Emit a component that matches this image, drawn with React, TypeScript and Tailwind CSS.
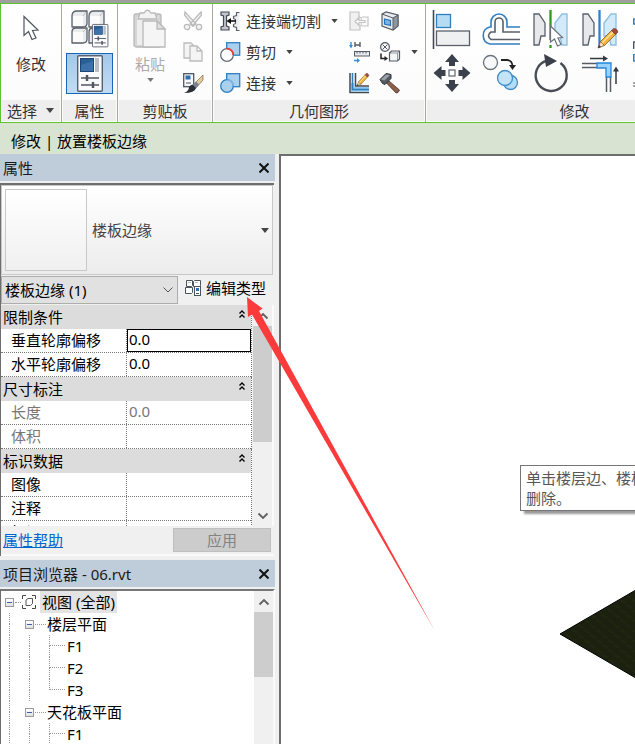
import React from 'react';

const Caret = ({ className = '' }: { className?: string }) => (
  <svg viewBox="0 0 8 5" className={`h-1 w-[7px] shrink-0 fill-[#444] ${className}`}>
    <path d="M0 0h8L4 5z" />
  </svg>
);

const Chevron = ({ up = false }: { up?: boolean }) => (
  <svg viewBox="0 0 12 8" className="h-2 w-3" fill="none" stroke="#606060" strokeWidth="1.800">
    {up ? <path d="M1.500 6.500L6 2l4.500 4.500" /> : <path d="M1.500 1.500L6 6l4.500-4.500" />}
  </svg>
);

const CloseButton = ({ label }: { label: string }) => (
  <button aria-label={label} className="p-1">
    <svg viewBox="0 0 10 10" className="size-[10px]" stroke="#111" strokeWidth="2">
      <path d="M0.500 0.500l9 9M9.500 0.500l-9 9" />
    </svg>
  </button>
);

const Pencil = ({ transform }: { transform: string }) => (
  <g transform={transform}>
    <path d="M0 20L2.500 13.500 6.500 17.500z" fill="#f3dfbd" stroke="#6b4a1f" strokeWidth="0.800" />
    <path d="M0 20l1-3 2 2z" fill="#333" />
    <path d="M2.500 13.500L13.500 2.500l4 4L6.500 17.500z" fill="#f0b43c" stroke="#8a5a1c" strokeWidth="0.800" />
    <path d="M4 15L15 4" stroke="#ffe09a" strokeWidth="1.500" />
    <path d="M13.500 2.500l2-2q2-.5 4 2l.300 1.700-2.300 2.300z" fill="#a04a3a" stroke="#6e3328" strokeWidth="0.600" />
  </g>
);

/* ---------- ribbon icons ---------- */

const big = 'size-10 overflow-hidden';
const small = 'size-5 shrink-0 overflow-visible';

const CursorIcon = () => (
  <svg viewBox="0 0 18 27" className="h-[27px] w-[18px]">
    <path d="M2 1.500v19l4.500-4 3.500 8 4-1.500-3.500-7.500 5.500-.500z" fill="#fff" stroke="#4f555e" strokeWidth="1.200" />
  </svg>
);

const PropertiesPage = () => (
  <>
    <rect x="0.700" y="0.700" width="24.600" height="35.600" rx="1" fill="#fafbfc" stroke="#5a606a" strokeWidth="1.400" />
    <rect x="3.500" y="3.500" width="13" height="13" fill="#2a5f96" stroke="#1c4676" />
    <path d="M4 10l12-4v10H4z" fill="#4d86bd" opacity=".5" />
    <path d="M18 3h4v14h-4z" fill="#b9bec5" />
    <path d="M4 23h18M4 30h18" stroke="#505762" strokeWidth="1.500" />
    <path d="M10 20v6M16 27v6" stroke="#505762" strokeWidth="2.500" />
  </>
);

const TypePropertiesIcon = () => (
  <svg viewBox="0 0 38 38" className="h-[38px] w-[38px]">
    <g fill="#e9ebee" stroke="#59606a" strokeWidth="1.300" strokeLinejoin="round">
      <path d="M1 17V6q0-5 5-5h10v12q0 4-4 4zM18 17V6q0-5 5-5h10v12q0 4-4 4z" />
      <path d="M1 33V22q0-4 4-4h11v11q0 4-4 4zM18 33V22q0-4 4-4h11v11q0 4-4 4z" />
    </g>
    <path d="M2 6h10v10H2zM19 6h10v10H19zM2 22h10v10H2z" fill="#fbfbfc" />
    <path d="M12 6l3-4M29 6l3-4M12 22l3-3" stroke="#b9bec5" />
    <g transform="translate(21 14) scale(.63)">
      <PropertiesPage />
    </g>
  </svg>
);

const PasteIcon = () => (
  <svg viewBox="0 0 34 40" className="h-10 w-[34px]" stroke="#b9b9b9" strokeWidth="1.300">
    <rect x="1" y="5" width="27" height="33" rx="2" fill="#d5d5d5" />
    <rect x="4" y="8" width="21" height="28" fill="#eee" stroke="none" />
    <path d="M7 4h4q3.500-5.500 7 0h4l2 6H5z" fill="#f3f3f3" />
    <path d="M10 12h14l8 8v18H10z" fill="#f5f5f5" />
    <path d="M24 12v8h8z" fill="#e0e0e0" />
  </svg>
);

const CutIcon = () => (
  <svg viewBox="0 0 20 20" className={small} fill="#f4f4f4" stroke="#bcbcbc" strokeWidth="1.300">
    <path d="M2 1l11 12-2.500 2L1.500 4zM18 1L7 13l2.500 2L18.500 4z" />
    <circle cx="4" cy="16" r="2.700" />
    <circle cx="16" cy="16" r="2.700" />
  </svg>
);

const CopySmallIcon = () => (
  <svg viewBox="0 0 20 20" className={small} fill="#f4f4f4" stroke="#bcbcbc" strokeWidth="1.300">
    <path d="M1 1h7l4 4v11H1z" />
    <path d="M7 4h7l5 5v10H7zM14 4v5h5" />
  </svg>
);

const MatchIcon = () => (
  <svg viewBox="0 0 20 20" className={small}>
    <rect x="0.700" y="0.700" width="10" height="13" fill="#f7f8fa" stroke="#505762" strokeWidth="1.300" />
    <path d="M2.500 2.500h5v4h-5z" fill="#2f6fae" />
    <path d="M3 10h5" stroke="#505762" />
    <path d="M20 2v5l-7 8-3-3z" fill="#e2cb9d" stroke="#7d6540" strokeWidth="0.700" />
    <path d="M13 8.500l3 3-3 4-4-3z" fill="#7c828c" />
    <path d="M9.500 11.500l3.500 3.500q-1 5-12 5 5-2 5-6 1-2 3.500-2.500z" fill="#2b2f38" />
  </svg>
);

const CopingIcon = () => (
  <svg viewBox="0 0 20 20" className={small}>
    <path d="M1 1h8v3L6.500 5v10L9 16v3H1v-3l2.500-1V5L1 4z" fill="#c3c7cc" stroke="#444a54" strokeWidth="1.200" />
    <path d="M19.500 1.500h-3v3l-3 1v2l2 1v4l-2 1v2l3 1v3h3" fill="#eceef0" stroke="#5b626c" strokeWidth="1.200" />
    <path d="M8 10h8" stroke="#111" strokeWidth="1.600" />
    <path d="M11 7l-4.500 3 4.500 3z" fill="#111" />
  </svg>
);

const CutGeometryIcon = () => (
  <svg viewBox="0 0 20 20" className={small}>
    <rect x="6.700" y="0.700" width="13" height="12.500" fill="#a9d1ee" stroke="#2f7fc0" strokeWidth="1.300" />
    <circle cx="7" cy="13" r="6.300" fill="#fff" stroke="#666d77" strokeWidth="1.300" />
    <path d="M6.500 6.700a6.300 6.300 0 0 1 6.800 6.300" fill="none" stroke="#f03a32" strokeWidth="1.800" />
  </svg>
);

const JoinIcon = () => (
  <svg viewBox="0 0 20 20" className={small}>
    <rect x="6.700" y="0.700" width="13" height="13" fill="#a9d1ee" stroke="#2f7fc0" strokeWidth="1.300" />
    <circle cx="7" cy="13" r="6.300" fill="#a9d1ee" stroke="#2f7fc0" strokeWidth="1.300" />
    <path d="M7.500 6.700a6.300 6.300 0 0 1 5.800 6.300" fill="none" stroke="#7fb8e2" strokeWidth="1.500" />
  </svg>
);

const NotchIcon = () => (
  <svg viewBox="0 0 20 20" className={small} fill="#f0f0f0" stroke="#c3c3c3" strokeWidth="1.200">
    <path d="M1 1h9v5l3 1v7l-2 1v4H1z" />
    <path d="M13 6h6v9h-6M6 10.500l4-4v3h6v2h-6v3z" fill="#fafafa" />
  </svg>
);

const OpeningIcon = () => (
  <svg viewBox="0 0 20 20" className={small}>
    <path d="M2 3l4-2 12 3v11l-5 4-11-4z" fill="#e9ebee" stroke="#555c66" strokeWidth="1.200" />
    <path d="M13 7l5-3v11l-5 4z" fill="#8f969f" stroke="#555c66" />
    <path d="M2 3l11 4" stroke="#555c66" />
    <path d="M4.500 8l6 1.500v5l-6-1.500z" fill="#79b6e4" stroke="#2672b5" strokeWidth="1.200" />
  </svg>
);

const BeamJoinIcon = () => (
  <svg viewBox="0 0 20 20" className={small}>
    <path d="M2 0v4M5 18.500h4" stroke="#2f8fdd" strokeWidth="1.400" />
    <path d="M0 3h4L2 6.500zM8 16l3 2.500L8 21z" fill="#2f8fdd" />
    <path d="M6 0v5M11 0v5M6 3h5" stroke="#555c66" strokeWidth="1.400" />
    <rect x="5.500" y="9.500" width="15" height="4.500" fill="#e9ebee" stroke="#555c66" />
    <path d="M8 9.500v2M11 9.500v2M14 9.500v2M17 9.500v2" stroke="#555c66" />
  </svg>
);

const SplitFaceIcon = () => (
  <svg viewBox="0 0 20 20" className={small} fill="#f4f5f7" stroke="#555c66" strokeWidth="1.200">
    <circle cx="5" cy="5" r="4.400" />
    <path d="M2.500 2.500l5 5M7.500 2.500l-5 5" strokeWidth="1" />
    <path d="M1 11.500v5h4" fill="none" stroke="#222" strokeWidth="1.500" />
    <path d="M4.500 14L8 16.500 4.500 19z" fill="#222" stroke="none" />
    <path d="M9.500 11l2-2h8v8l-2 2h-8z" />
    <path d="M9.500 11h8v8M17.500 11l2-2" fill="none" strokeWidth="0.600" />
  </svg>
);

const WallJoinIcon = () => (
  <svg viewBox="0 0 20 20" className={small}>
    <path d="M1 0v19.500h19M6.500 0v13H20" fill="none" stroke="#424852" strokeWidth="1.500" />
    <path d="M2 10v8.500h18v-4.500H5.500V10z" fill="#8fc6ef" />
    <path d="M3.500 0v16.500H20" fill="none" stroke="#2f7fc0" strokeWidth="1.600" />
    <Pencil transform="translate(8 0) scale(.6 .65)" />
  </svg>
);

const HammerIcon = () => (
  <svg viewBox="0 0 20 20" className={small}>
    <path d="M9 8l10.500 9-1.500 2.500-2 .5L6.500 10z" fill="#8c5f4c" stroke="#4a342b" strokeWidth="0.800" />
    <path d="M0 6.500L6 0.500l5 1v4L5 11.500l-2.500-1z" fill="#555b65" stroke="#2d3139" />
    <path d="M1 6.500l5-5 4 .500-5.500 5.500z" fill="#9aa1ab" />
  </svg>
);

const AlignIcon = () => (
  <svg viewBox="0 0 40 40" className={big}>
    <path d="M1.500 1v39" stroke="#444a54" strokeWidth="1.600" />
    <rect x="4.500" y="5.500" width="14" height="13" fill="#b5dcf3" stroke="#2f7fc0" strokeWidth="1.300" />
    <rect x="4.500" y="22" width="33" height="14.500" fill="#eff0f2" stroke="#59606a" strokeWidth="1.300" />
  </svg>
);

const OffsetIcon = () => (
  <svg viewBox="0 0 40 40" className={big} fill="none" strokeWidth="1.600">
    <path d="M38 18H25v-5a8 8 0 0 0-16 0v5H8C-1 20-1 33 8 35h30" stroke="#2f7fc0" />
    <path d="M38 23H21V13a4 4 0 0 0-8 0v10H9q-5 3.500 0 7.500h29" stroke="#59606a" />
  </svg>
);

const MirrorPickIcon = () => (
  <svg viewBox="0 0 40 40" className={big}>
    <path d="M2 5h5l6 9v13H9l-2 9H2z" fill="#e6e8eb" stroke="#59606a" strokeWidth="1.300" />
    <path d="M35 5h-5l-7 9v13h5l2 9h5z" fill="#d3eafa" stroke="#8fc0e2" strokeWidth="1.400" />
    <path d="M18.500 1v30M18.500 36v3" stroke="#2f9a1c" strokeWidth="2.300" />
    <path d="M18.500 17v16l4-3 3 7 3.500-1.500-3-6.500 4.500-.500z" fill="#fff" stroke="#6b727c" strokeWidth="1.200" />
  </svg>
);

const MirrorDrawIcon = () => (
  <svg viewBox="0 0 40 40" className={big}>
    <path d="M1 5h5l6 9v13H8l-2 9H1z" fill="#e6e8eb" stroke="#59606a" strokeWidth="1.300" />
    <path d="M34 5h-5l-7 9v13h5l2 9h5z" fill="#d3eafa" stroke="#8fc0e2" strokeWidth="1.400" />
    <path d="M17.500 1v37" stroke="#2f7fd0" strokeWidth="2.300" />
    <Pencil transform="translate(16 19)" />
  </svg>
);

const MoveIcon = () => (
  <svg viewBox="0 0 40 40" className={big} fill="#3b414a">
    <path d="M20 0l7 8h-4v4h-6V8h-4zM20 38l7-8h-4v-4h-6v4h-4zM1.500 19l8-7v4h4v6h-4v4zM38.500 19l-8-7v4h-4v6h4v4z" />
    <rect x="17" y="16" width="6" height="6" fill="#fff" stroke="#6b727c" strokeWidth="1.300" />
  </svg>
);

const CopyIcon = () => (
  <svg viewBox="0 0 40 40" className={big} strokeWidth="1.300">
    <circle cx="8.500" cy="8.500" r="7" fill="#f7f8f9" stroke="#6b727c" />
    <path d="M19 6h6q5 0 5.500 6" fill="none" stroke="#222" strokeWidth="1.800" />
    <path d="M27 11h7l-3.500 5z" fill="#222" />
    <circle cx="28.500" cy="28.500" r="7" fill="#b5dcf3" stroke="#3f8cc8" />
    <circle cx="23" cy="24" r="7.500" fill="#c3e3f6" stroke="#3f8cc8" />
  </svg>
);

const RotateIcon = () => (
  <svg viewBox="0 0 40 40" className={big}>
    <path d="M28.500 9A15.500 15.500 0 1 1 14 6.800" fill="none" stroke="#484d56" strokeWidth="2.400" />
    <path d="M12 0l13 7-11 6z" fill="#3b414a" />
  </svg>
);

const TrimIcon = () => (
  <svg viewBox="0 0 40 40" className={big} fill="none">
    <path d="M8 4.500h14M34 30V16" stroke="#333942" strokeWidth="1.500" />
    <path d="M21 1.500l5 3-5 3zM31 17.500l3-5 3 5z" fill="#333942" />
    <path d="M0 9.500h15M0 13.500h15M24.500 23v15M28.500 23v15" stroke="#555c66" strokeWidth="1.500" />
    <path d="M15 9h14v14h-5v-9h-9z" fill="#9bd1fa" stroke="#2687dc" strokeWidth="1.300" />
  </svg>
);

const ArrayIcon = () => (
  <svg viewBox="0 0 40 40" className={big} fill="#d3eafa" strokeWidth="1.400">
    <rect x="1.700" y="10" width="10" height="5" stroke="#2f7fc0" />
    <rect x="1.700" y="33" width="10" height="9" fill="#fff" stroke="#505762" />
  </svg>
);

const ScaleIcon = () => (
  <svg viewBox="0 0 40 40" className={big} strokeWidth="1.400">
    <rect x="1.700" y="0" width="10" height="7" fill="#d3eafa" stroke="#2f7fc0" />
    <path d="M1 29h8M1 32h8" stroke="#888" />
  </svg>
);

const GroupIcon = () => (
  <svg viewBox="0 0 17 17" className="size-[17px]" fill="#fff" stroke="#4d535c">
    <path d="M1.500 7.500v-6h6v5l-1 1zM8.500 7.500v-5l1-1h6v5l-1 1zM0.500 14.500v-6h7v5l-1 1z" />
    <path d="M3 3.500h3M10 3.500h3" stroke="#b9bec5" />
    <rect x="9.500" y="7.500" width="6" height="9" />
    <path d="M11 9h3v3h-3z" fill="#2f6fae" stroke="none" />
    <path d="M11 14.500h3" />
  </svg>
);

/* ---------- ribbon ---------- */

const Panel = ({ title, width, caret, children }: {
  title: string;
  width: string;
  caret?: boolean;
  children: React.ReactNode;
}) => (
  <section className={`flex shrink-0 flex-col border-r border-[#a5aaa2] px-px pb-px ${width}`}>
    <div className="h-24">{children}</div>
    <h2 className="flex h-[21px] items-center justify-center gap-2 bg-[#eeeeee] text-[#333]">
      {title}
      {caret && <Caret className="h-[5px] w-[10px]" />}
    </h2>
  </section>
);

const IconButton = ({ label, children }: { label: string; children: React.ReactNode }) => (
  <button aria-label={label} className="block">{children}</button>
);

const geometryMenus = [
  { label: '连接端切割', icon: <CopingIcon /> },
  { label: '剪切', icon: <CutGeometryIcon /> },
  { label: '连接', icon: <JoinIcon /> },
];

const modifyTools = [
  { label: '对齐', icon: <AlignIcon /> },
  { label: '偏移', icon: <OffsetIcon /> },
  { label: '镜像 - 拾取轴', icon: <MirrorPickIcon /> },
  { label: '镜像 - 绘制轴', icon: <MirrorDrawIcon /> },
  { label: '阵列', icon: <ArrayIcon /> },
  { label: '移动', icon: <MoveIcon /> },
  { label: '复制', icon: <CopyIcon /> },
  { label: '旋转', icon: <RotateIcon /> },
  { label: '修剪', icon: <TrimIcon /> },
  { label: '缩放', icon: <ScaleIcon /> },
];

const Ribbon = () => (
  <header className="flex shrink-0 overflow-hidden border-y border-l border-[#5cc52e] bg-gradient-to-b from-white to-[#fbfbfb]">
    <Panel title="选择" width="w-[61px]" caret>
      <button className="flex w-full flex-col items-center pt-[11px] text-[#333]">
        <CursorIcon />
        <span className="mt-3">修改</span>
      </button>
    </Panel>
    <Panel title="属性" width="w-[56px]">
      <div className="flex flex-col items-center gap-[5px] pt-[6px]">
        <IconButton label="类型属性"><TypePropertiesIcon /></IconButton>
        <button
          aria-label="属性"
          aria-pressed="true"
          className="flex h-[41px] w-[47px] items-center justify-center border border-[#1a65b5] bg-gradient-to-b from-[#a4c8ea] to-[#c2dcf4]"
        >
          <svg viewBox="0 0 26 37" className="h-[37px] w-[26px]"><PropertiesPage /></svg>
        </button>
      </div>
    </Panel>
    <Panel title="剪贴板" width="w-[95px]">
      <div className="flex justify-between pr-2 pl-[14px] pt-[5px]">
        <button className="flex flex-col items-center text-[#aaa]" disabled>
          <PasteIcon />
          <span className="mt-[5px]">粘贴</span>
          <Caret className="mt-1 fill-[#777]" />
        </button>
        <div className="flex flex-col gap-[11px] pt-[2px]">
          <IconButton label="剪切到剪贴板"><CutIcon /></IconButton>
          <IconButton label="复制到剪贴板"><CopySmallIcon /></IconButton>
          <IconButton label="匹配类型"><MatchIcon /></IconButton>
        </div>
      </div>
    </Panel>
    <Panel title="几何图形" width="w-[213px]">
      <div className="flex pl-[6px] pt-[7px]">
        <div className="flex w-[129px] flex-col items-start gap-[11px]">
          {geometryMenus.map((m) => (
            <button key={m.label} className="flex h-5 items-center gap-[6px] text-[#333]">
              {m.icon}
              {m.label}
              <Caret className="ml-1" />
            </button>
          ))}
        </div>
        <div className="grid grid-cols-[20px_20px_8px] items-center gap-x-[11px] gap-y-[11px]">
          <IconButton label="拆分"><NotchIcon /></IconButton>
          <IconButton label="洞口"><OpeningIcon /></IconButton>
          <span />
          <IconButton label="梁/柱连接"><BeamJoinIcon /></IconButton>
          <IconButton label="拆分面"><SplitFaceIcon /></IconButton>
          <Caret />
          <IconButton label="墙连接"><WallJoinIcon /></IconButton>
          <IconButton label="拆除"><HammerIcon /></IconButton>
        </div>
      </div>
    </Panel>
    <Panel title="修改" width="w-[298px]">
      <div className="grid grid-cols-[repeat(5,50px)] gap-y-[5px] pl-[5px] pt-[5px]">
        {modifyTools.map((t) => (
          <IconButton key={t.label} label={t.label}>{t.icon}</IconButton>
        ))}
      </div>
    </Panel>
  </header>
);

/* ---------- properties palette ---------- */

const PaletteTitle = ({ children }: { children: string }) => (
  <div className="flex h-[27px] shrink-0 items-center justify-between bg-[#bfcddb] pr-[2px] pl-[3px] text-[#1a1a1a]">
    <h2>{children}</h2>
    <CloseButton label={`关闭 ${children}`} />
  </div>
);

const Scrollbar = ({ thumb, down }: { thumb: string; down?: boolean }) => (
  <div className="flex w-[19px] shrink-0 flex-col bg-[#f0f0f0]">
    <button aria-label="向上滚动" className="flex h-[21px] shrink-0 items-center justify-center">
      <Chevron up />
    </button>
    <div className={`shrink-0 bg-[#cdcdcd] ${thumb}`} />
    {down && (
      <button aria-label="向下滚动" className="mt-auto flex h-[21px] shrink-0 items-center justify-center">
        <Chevron />
      </button>
    )}
  </div>
);

type Row = { name: string; value?: string; disabled?: boolean; active?: boolean };

const groups: { title: string; rows: Row[] }[] = [
  {
    title: '限制条件',
    rows: [
      { name: '垂直轮廓偏移', value: '0.0', active: true },
      { name: '水平轮廓偏移', value: '0.0' },
    ],
  },
  {
    title: '尺寸标注',
    rows: [
      { name: '长度', value: '0.0', disabled: true },
      { name: '体积', disabled: true },
    ],
  },
  { title: '标识数据', rows: [{ name: '图像' }, { name: '注释' }, { name: '标记' }] },
];

const PropertyRow = ({ name, value = '', disabled, active }: Row) => (
  <label className={`flex h-6 border-b border-dotted border-[#777] ${disabled ? 'text-[#777]' : 'text-black'}`}>
    <span className="w-[125px] shrink-0 pl-[10px] leading-[22px]">{name}</span>
    <input
      defaultValue={value}
      disabled={disabled}
      className={`w-0 flex-1 border-l border-dotted border-[#777] pb-[3px] pl-[2px] leading-5 outline-none ${
        active ? 'ring-1 ring-black ring-inset' : ''
      }`}
    />
  </label>
);

const Properties = () => (
  <section className="flex shrink-0 flex-col">
    <PaletteTitle>属性</PaletteTitle>
    <div className="mt-[2px] mr-px border-t-2 border-l border-[#6e6e6e]">
      <div className="pr-px">
        <button className="flex h-[90px] w-full items-center border border-[#c8c8c8] bg-gradient-to-b from-white to-[#ececec] pr-[2px] pl-[3px] text-[#444]">
          <span className="mr-[5px] size-[82px] border border-[#c8c8c8] bg-gradient-to-b from-white to-[#f0f0f0]" />
          楼板边缘
          <Caret className="ml-auto h-[5px] w-[10px]" />
        </button>
      </div>
      <div className="flex items-center justify-between py-px pr-[8px]">
        <div className="relative w-[177px]">
          <select aria-label="图元" className="h-7 w-full appearance-none border border-[#adadad] bg-[#e1e1e1] pl-[3px] text-black">
            <option>楼板边缘 (1)</option>
          </select>
          <svg viewBox="0 0 10 6" className="pointer-events-none absolute top-[11px] right-[5px] h-[6px] w-[10px]" fill="none" stroke="#555">
            <path d="M0.500 0.500L5 5l4.500-4.500" />
          </svg>
        </div>
        <button className="flex items-center gap-1 pb-[5px] text-black">
          <GroupIcon />
          编辑类型
        </button>
      </div>
      <div className="flex h-[221px] overflow-hidden">
        <div className="min-w-0 flex-1 bg-white">
          {groups.map((g) => (
            <div key={g.title} className="border-r border-dotted border-[#777]">
              <button className="flex h-6 w-full items-center justify-between bg-[#dcdcdc] pr-[6px] pl-[2px] text-black">
                {g.title}
                <svg viewBox="0 0 6 8" className="mb-[6px] h-2 w-[6px]" fill="none" stroke="#000" strokeWidth="1.300">
                  <path d="M0.500 3.500L3 1l2.500 2.500M0.500 7.500L3 5l2.500 2.500" />
                </svg>
              </button>
              {g.rows.map((r) => <PropertyRow key={r.name} {...r} />)}
            </div>
          ))}
        </div>
        <div className="flex border-r-2 border-[#fafafa] pl-px">
          <Scrollbar thumb="h-[116px]" down />
        </div>
      </div>
      <div className="flex items-center justify-between border-b-2 border-[#fafafa] py-[2px] pr-[3px] pl-[2px]">
        <a href="#help" className="text-[#0066cc] underline">属性帮助</a>
        <button disabled className="h-6 w-[98px] border border-[#bfbfbf] bg-[#cccccc] text-[#838383]">应用</button>
      </div>
    </div>
  </section>
);

/* ---------- project browser ---------- */

const Toggle = () => (
  <button aria-label="折叠" className="flex size-[9px] shrink-0 items-center justify-center border border-[#999] bg-gradient-to-b from-white to-[#e0e0e0]">
    <span className="h-px w-[5px] bg-[#3f5fa8]" />
  </button>
);

const Guide = ({ kind }: { kind: 'line' | 'tee' | 'elbow' }) => (
  <span className="flex h-[22px] w-5 shrink-0 flex-col pl-1">
    <span className={`h-[11px] border-l border-dotted border-[#999] ${kind === 'line' ? '' : 'border-b'}`} />
    <span className={`h-[11px] border-[#999] ${kind === 'elbow' ? '' : 'border-l border-dotted'}`} />
  </span>
);

const Dash = ({ width }: { width: string }) => (
  <span className={`shrink-0 border-t border-dotted border-[#999] ${width}`} />
);

const Category = ({ name, items, open }: { name: string; items: string[]; open?: boolean }) => (
  <li>
    <div className="flex h-[22px] items-center">
      <Guide kind="line" />
      <Toggle />
      <Dash width="mx-px w-[11px]" />
      <span>{name}</span>
    </div>
    <ul>
      {items.map((item, i) => (
        <li key={item} className="flex h-[22px] items-center">
          <Guide kind="line" />
          <Guide kind="line" />
          <Guide kind={!open && i === items.length - 1 ? 'elbow' : 'tee'} />
          <span className="pl-[2px]">{item}</span>
        </li>
      ))}
    </ul>
  </li>
);

const Browser = () => (
  <section className="mt-[4px] flex min-h-0 flex-1 flex-col">
    <PaletteTitle>项目浏览器 - 06.rvt</PaletteTitle>
    <div className="mt-[2px] flex min-h-0 flex-1 overflow-hidden border-t-2 border-r-2 border-l border-t-[#777] border-r-[#fafafa] border-l-[#6e6e6e] bg-white text-black">
      <ul className="min-w-0 flex-1 pl-1">
        <li>
          <div className="flex h-[22px] items-center">
            <Toggle />
            <Dash width="mx-px w-[6px]" />
            <svg viewBox="0 0 14 14" className="mr-1 size-[14px]" fill="none" stroke="#444">
              <path d="M0.500 4V0.500H4M10 0.500h3.500V4M0.500 10v3.500H4M10 13.500h3.500V10" />
              <path d="M4 5l2-1.500h4.500v5l-2 2H4z" strokeWidth="0.900" />
            </svg>
            <span className="h-[22px] bg-[#e3e3e3] px-[2px] leading-[22px]">视图 (全部)</span>
          </div>
          <ul>
            <Category name="楼层平面" items={['F1', 'F2', 'F3']} />
            <Category name="天花板平面" items={['F1']} open />
          </ul>
        </li>
      </ul>
      <Scrollbar thumb="h-[65px]" />
    </div>
  </section>
);

/* ---------- drawing area ---------- */

const Canvas = () => (
  <main className="relative ml-1 min-w-0 flex-1 overflow-hidden border-t-2 border-l-2 border-[#6e6e6e] bg-white">
    <svg viewBox="0 0 200 232" className="absolute top-[362px] left-[279px] h-[232px] w-[200px]">
      <defs>
        <pattern id="grass" width="12" height="10" patternUnits="userSpaceOnUse">
          <path d="M0 0h12v10H0z" fill="#1b200f" />
          <path d="M0 2l6 3M6 7l6 3" stroke="#20260f" strokeWidth="2" />
        </pattern>
      </defs>
      <path d="M0 116L200 0v232z" fill="url(#grass)" stroke="#000" />
    </svg>
    <div className="absolute top-[309px] left-[239px] w-[260px] border border-[#767676] bg-white px-[5px] py-[2px] leading-5 text-[#575757] shadow-[4px_3px_2px_#999]">
      <p>单击楼层边、楼板边</p>
      <p>删除。</p>
    </div>
  </main>
);

const App = () => {
  return (
    <div className="relative flex h-screen flex-col overflow-hidden bg-[#f0f0f0] font-['Noto_Sans','Noto_Sans_CJK_SC',sans-serif] text-[15px] leading-5">
      <div className="h-[3px] shrink-0 bg-[#9f9f9f]" />
      <Ribbon />
      <div className="flex h-[31px] shrink-0 items-center bg-[#d8e4d1] px-[11px] pt-[5px] text-black">
        修改 | 放置楼板边缘
      </div>
      <div className="flex min-h-0 flex-1">
        <aside className="flex w-[275px] shrink-0 flex-col">
          <Properties />
          <Browser />
        </aside>
        <Canvas />
      </div>
      {/* Callout arrow pointing at the edit type button */}
      <svg viewBox="0 0 190 335" className="pointer-events-none absolute top-[297px] left-[246px] h-[335px] w-[190px]">
        <path d="M1 0L16.500 11.500 13 14 189 334 6 17.500 2 20z" fill="#fb3b3b" />
      </svg>
    </div>
  );
};

export default App;
